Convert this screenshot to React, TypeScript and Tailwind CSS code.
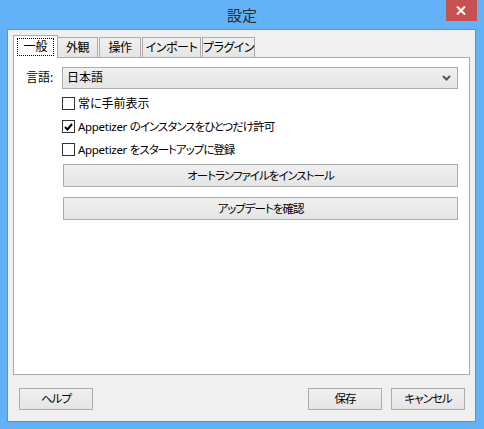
import React from 'react';

const font = { fontFamily: '"Noto Sans", "Noto Sans CJK JP", sans-serif' };

function Checkbox({ checked, label }: { checked?: boolean; label: React.ReactNode }) {
  return (
    <div className="flex h-[23px] items-center gap-[3px]">
      <div className="flex h-[13px] w-[13px] items-center justify-center border border-[#333333] bg-white">
        {checked && (
          <svg width="9" height="8" viewBox="0 0 9 8">
            <path d="M1 4 L3.5 6.5 L8 1" fill="none" stroke="#000" strokeWidth="2" />
          </svg>
        )}
      </div>
      <span className="whitespace-nowrap text-[11.5px] leading-none tracking-[-1px] text-black">{label}</span>
    </div>
  );
}

function Button({ children, className }: { children: React.ReactNode; className?: string }) {
  return (
    <div
      className={
        'flex items-center justify-center whitespace-nowrap border border-[#acacac] bg-gradient-to-b from-[#f0f0f0] to-[#e5e5e5] text-[11.5px] leading-none tracking-[-1px] text-black ' +
        (className ?? '')
      }
    >
      {children}
    </div>
  );
}

const Latin = ({ children }: { children: React.ReactNode }) => (
  <span className="tracking-[-0.3px]">{children} </span>
);

export default function App() {
  const tabs = [
    { label: '外観', w: 'w-[41px] -ml-px' },
    { label: '操作', w: 'w-[42px] ml-px' },
    { label: 'インポート', w: 'w-[59px] ml-px' },
    { label: 'プラグイン', w: 'w-[53px] ml-px' },
  ];

  return (
    <div
      className="flex h-[429px] w-[484px] flex-col overflow-hidden bg-[#63b2f8] [font-feature-settings:'palt']"
      style={font}
    >
      {/* title bar */}
      <div className="flex h-[30px] items-start justify-between">
        <div className="w-[38px]" />
        <div className="pt-[5px] text-[15px] leading-[20px] text-[#2b2b2b]">設定</div>
        <div className="mr-[7px] flex h-[21px] w-[31px] items-center justify-center bg-[#c75050]">
          <svg width="10" height="9" viewBox="0 0 10 9">
            <path d="M1 0.5 L9 8.5 M9 0.5 L1 8.5" stroke="#fff" strokeWidth="2" />
          </svg>
        </div>
      </div>

      {/* client */}
      <div className="ml-[8px] flex h-[391px] w-[467px] flex-col bg-[#f0f0f0] pl-[5px] pt-[5px] shadow-[0_0_0_1px_#4f97dc]">
        <div className="flex h-[22px] items-end">
          <div className="relative z-10 -mb-px flex h-[23px] w-[45px] items-start justify-center border-x border-t border-[#acacac] bg-white pt-[2px]">
            <span className="whitespace-nowrap border border-dotted border-black px-[5px] py-[1px] text-[12px] leading-[14px] text-black">一般</span>
          </div>
          {tabs.map((t) => (
            <div
              key={t.label}
              className={
                'flex h-[20px] items-center justify-center whitespace-nowrap border-x border-t border-[#acacac] bg-gradient-to-b from-[#f0f0f0] to-[#e5e5e5] text-[12px] leading-none tracking-[-0.5px] text-black ' +
                t.w
              }
            >
              {t.label}
            </div>
          ))}
        </div>

        <div className="h-[318px] w-[457px] border border-[#acacac] bg-white pl-[12px] pt-[9px]">
          <div className="flex h-[22px] items-center">
            <div className="w-[36px] text-[12px] leading-none text-black">言語:</div>
            <div className="flex h-[22px] w-[396px] items-center justify-between border border-[#acacac] bg-gradient-to-b from-[#f0f0f0] to-[#e5e5e5] pl-[4px] pr-[6px]">
              <span className="text-[12px] leading-none text-black">日本語</span>
              <svg width="9" height="6" viewBox="0 0 9 6">
                <path d="M1 1 L4.5 4.5 L8 1" fill="none" stroke="#555" strokeWidth="2" />
              </svg>
            </div>
          </div>

          <div className="mt-[3px] flex flex-col pl-[36px]">
            <Checkbox label={<span className="text-[12px] tracking-normal">常に手前表示</span>} />
            <Checkbox checked label={<><Latin>Appetizer</Latin>のインスタンスをひとつだけ許可</>} />
            <Checkbox label={<><Latin>Appetizer</Latin>をスタートアップに登録</>} />
            <Button className="ml-px mt-[3px] h-[23px] w-[395px]">オートランファイルをインストール</Button>
            <Button className="ml-px mt-[10px] h-[23px] w-[395px]">アップデートを確認</Button>
          </div>
        </div>

        <div className="mt-[13px] flex pr-[10px]">
          <Button className="ml-[6px] h-[22px] w-[74px]">ヘルプ</Button>
          <div className="flex-1" />
          <Button className="h-[22px] w-[74px]">保存</Button>
          <Button className="ml-[9px] h-[22px] w-[74px]">キャンセル</Button>
        </div>
      </div>
    </div>
  );
}
